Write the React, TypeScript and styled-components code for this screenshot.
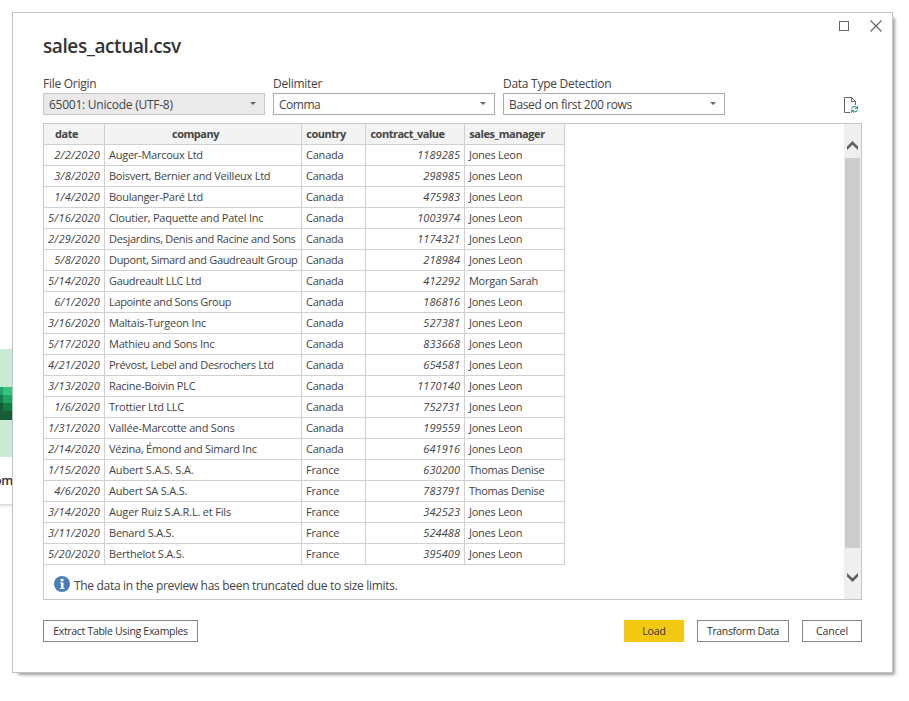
import React from "react";
import styled, { createGlobalStyle } from "styled-components";

const Global = createGlobalStyle`
  * { box-sizing: border-box; }
  html, body { margin: 0; background: #fff; }
  body { font-family: "Open Sans", "Noto Sans", sans-serif; color: #444; overflow: hidden; }
`;

const Page = styled.div`
  position: relative;
  width: 909px;
  height: 701px;
  padding: 12px;
  overflow: hidden;
  background: #fff;
`;

const BackCard = styled.div`
  position: absolute;
  left: 0;
  top: 349px;
  width: 16px;
  height: 156px;
  border-bottom: 1px solid #dcdcdc;
  box-shadow: 0 1px 3px rgba(0, 0, 0, 0.12);
  overflow: hidden;
`;

const BackTile = styled.div`
  height: 108px;
  padding-top: 38px;
  background: #c8ead7;
  svg { display: block; }
`;

const BackLabel = styled.div`
  margin: 15px 0 0 -6px;
  font-size: 12.5px;
  line-height: 18px;
  font-weight: 600;
  color: #333;
  letter-spacing: -0.3px;
  white-space: nowrap;
`;

const Dialog = styled.div`
  position: relative;
  width: 881px;
  height: 661px;
  padding: 0 30px;
  background: #fff;
  border: 1px solid #c3c3c3;
  box-shadow: 4px 4px 3px -2px rgba(0, 0, 0, 0.38);
  display: flex;
  flex-direction: column;
`;

const WindowControls = styled.div`
  height: 26px;
  margin-right: -20px;
  display: flex;
  justify-content: flex-end;
  align-items: center;
  gap: 21px;
  svg { display: block; }
`;

const Title = styled.h1`
  margin: -7px 0 0;
  height: 28px;
  font-size: 19px;
  line-height: 28px;
  font-weight: 600;
  letter-spacing: -0.4px;
  color: #333;
`;

const Options = styled.div`
  display: flex;
  align-items: flex-end;
  gap: 8px;
  margin-top: 15px;
  height: 40px;
`;

const Field = styled.div`
  width: 222px;
`;

const Label = styled.div`
  height: 18px;
  font-size: 12px;
  line-height: 18px;
  letter-spacing: -0.27px;
`;

const Select = styled.div<{ $muted?: boolean; $spacing?: number }>`
  height: 22px;
  border: 1px solid ${(p) => (p.$muted ? "#c6c6c6" : "#ababab")};
  background: ${(p) => (p.$muted ? "#eaeaea" : "#fff")};
  display: flex;
  align-items: center;
  justify-content: space-between;
  padding: 2px 8px 0 5px;
  font-size: 12px;
  line-height: 18px;
  letter-spacing: ${(p) => p.$spacing ?? -0.25}px;
  svg { display: block; margin-top: -3px; }
`;

const Refresh = styled.div`
  margin-left: auto;
  margin-right: 3px;
  margin-bottom: 1px;
  svg { display: block; }
`;

const Preview = styled.div`
  margin-top: 8px;
  height: 477px;
  border: 1px solid #c6c6c6;
  display: flex;
  justify-content: space-between;
`;

const Table = styled.div`
  width: 521px;
  font-size: 11px;
  line-height: 20px;
`;

const Row = styled.div<{ $head?: boolean }>`
  display: grid;
  grid-template-columns: 61px 197px 64px 99px 100px;
  height: 21px;
  background: ${(p) => (p.$head ? "#f3f3f3" : "#fff")};
`;

const Cell = styled.div<{ $num?: boolean; $spacing?: number }>`
  height: 21px;
  border-right: 1px solid #d0d0d0;
  border-bottom: 1px solid #d0d0d0;
  padding: 0 4px;
  white-space: nowrap;
  text-align: ${(p) => (p.$num ? "right" : "left")};
  font-style: ${(p) => (p.$num ? "italic" : "normal")};
  letter-spacing: ${(p) => p.$spacing ?? -0.22}px;
`;

const HeadCell = styled(Cell)`
  padding: 0 19px 0 4px;
  text-align: center;
  font-weight: 700;
  letter-spacing: ${(p) => p.$spacing ?? -0.5}px;
`;

const Notice = styled.div`
  display: flex;
  align-items: flex-start;
  gap: 4px;
  margin: 10px 0 0 10px;
  font-size: 12px;
  line-height: 18px;
  letter-spacing: -0.31px;
  svg { display: block; margin-top: 1px; }
  span { padding-top: 2px; }
`;

const ScrollBar = styled.div`
  width: 17px;
  background: #efefef;
  padding: 0 1px;
  display: grid;
  grid-template-rows: 34px 390px 51px;
  justify-items: center;
  svg { display: block; }
`;

const Thumb = styled.div`
  width: 15px;
  background: #cccccc;
`;

const ArrowBox = styled.div<{ $top: number }>`
  padding-top: ${(p) => p.$top}px;
`;

const Footer = styled.div`
  margin-top: 20px;
  display: flex;
  gap: 13px;
`;

const Button = styled.button<{ $w: number; $primary?: boolean; $spacing?: number }>`
  width: ${(p) => p.$w}px;
  height: 22px;
  padding: 0;
  border: 1px solid ${(p) => (p.$primary ? "#f2c811" : "#848484")};
  background: ${(p) => (p.$primary ? "#f2c811" : "#fff")};
  font-family: inherit;
  font-size: 10.5px;
  line-height: 20px;
  color: #333;
  letter-spacing: ${(p) => p.$spacing ?? -0.1}px;
  white-space: nowrap;
`;

const Spacer = styled.div`
  flex: 1;
`;

// date, company, country, contract value, sales manager, company tracking
const rows: [string, string, string, string, string, number][] = [
  ["2/2/2020", "Auger-Marcoux Ltd", "Canada", "1189285", "Jones Leon", -0.25],
  ["3/8/2020", "Boisvert, Bernier and Veilleux Ltd", "Canada", "298985", "Jones Leon", -0.25],
  ["1/4/2020", "Boulanger-Paré Ltd", "Canada", "475983", "Jones Leon", -0.28],
  ["5/16/2020", "Cloutier, Paquette and Patel Inc", "Canada", "1003974", "Jones Leon", -0.22],
  ["2/29/2020", "Desjardins, Denis and Racine and Sons", "Canada", "1174321", "Jones Leon", -0.31],
  ["5/8/2020", "Dupont, Simard and Gaudreault Group", "Canada", "218984", "Jones Leon", -0.31],
  ["5/14/2020", "Gaudreault LLC Ltd", "Canada", "412292", "Morgan Sarah", -0.35],
  ["6/1/2020", "Lapointe and Sons Group", "Canada", "186816", "Jones Leon", -0.35],
  ["3/16/2020", "Maltais-Turgeon Inc", "Canada", "527381", "Jones Leon", -0.22],
  ["5/17/2020", "Mathieu and Sons Inc", "Canada", "833668", "Jones Leon", -0.25],
  ["4/21/2020", "Prévost, Lebel and Desrochers Ltd", "Canada", "654581", "Jones Leon", -0.31],
  ["3/13/2020", "Racine-Boivin PLC", "Canada", "1170140", "Jones Leon", -0.28],
  ["1/6/2020", "Trottier Ltd LLC", "Canada", "752731", "Jones Leon", -0.25],
  ["1/31/2020", "Vallée-Marcotte and Sons", "Canada", "199559", "Jones Leon", -0.2],
  ["2/14/2020", "Vézina, Émond and Simard Inc", "Canada", "641916", "Jones Leon", -0.27],
  ["1/15/2020", "Aubert S.A.S. S.A.", "France", "630200", "Thomas Denise", -0.15],
  ["4/6/2020", "Aubert SA S.A.S.", "France", "783791", "Thomas Denise", -0.2],
  ["3/14/2020", "Auger Ruiz S.A.R.L. et Fils", "France", "342523", "Jones Leon", -0.18],
  ["3/11/2020", "Benard S.A.S.", "France", "524488", "Jones Leon", -0.22],
  ["5/20/2020", "Berthelot S.A.S.", "France", "395409", "Jones Leon", -0.2],
];

const Caret = () => (
  <svg width="6" height="3" viewBox="0 0 6 3"><path d="M0 0h6L3 3z" fill="#666" /></svg>
);

const Chevron = ({ down }: { down?: boolean }) => (
  <svg width="11" height="9" viewBox="0 0 11 9">
    <path
      d={down ? "M0 3.500L5.500 9 11 3.500V0L5.500 5.200 0 0z" : "M0 5.500L5.500 0 11 5.500V9L5.500 3.800 0 9z"}
      fill="#606060"
    />
  </svg>
);

export default function App() {
  return (
    <Page>
      <Global />
      <BackCard>
        <BackTile>
          <svg width="12" height="33" shapeRendering="crispEdges">
            <rect width="12" height="33" fill="#185c37" />
            <rect width="3" height="8" fill="#21a366" />
            <rect x="3" width="9" height="8" fill="#33c481" />
            <rect y="8" width="3" height="8" fill="#148047" />
            <rect x="3" y="8" width="9" height="8" fill="#21a366" />
            <rect x="3" y="16" width="9" height="8" fill="#107c41" />
          </svg>
        </BackTile>
        <BackLabel>om</BackLabel>
      </BackCard>
      <Dialog>
        <WindowControls>
          <svg width="10" height="10"><rect x=".5" y=".5" width="9" height="9" fill="none" stroke="#666" /></svg>
          <svg width="12" height="12"><path d="M.5 .5l11 11M11.5 .5l-11 11" stroke="#666" strokeWidth="1.2" /></svg>
        </WindowControls>
        <Title>sales_actual.csv</Title>
        <Options>
          <Field>
            <Label>File Origin</Label>
            <Select $muted>65001: Unicode (UTF-8)<Caret /></Select>
          </Field>
          <Field>
            <Label>Delimiter</Label>
            <Select $spacing={-0.5}>Comma<Caret /></Select>
          </Field>
          <Field>
            <Label>Data Type Detection</Label>
            <Select $spacing={-0.35}>Based on first 200 rows<Caret /></Select>
          </Field>
          <Refresh>
            <svg width="15" height="17" viewBox="0 0 15 17" fill="none">
              <path d="M6 15.500H.5V.5h7l4 4V8M7.500 .5v4h4" stroke="#666" />
              <path
                d="M7.500 11.500C8.500 9.200 11.500 9 13 11M13.500 8.800V11.500H11M13.500 13C12.500 15.400 9.500 15.500 8 13.600M7.500 16V13.300H10"
                stroke="#4b9b7d"
                strokeWidth="1.1"
              />
            </svg>
          </Refresh>
        </Options>
        <Preview>
          <div>
            <Table>
              <Row $head>
                <HeadCell>date</HeadCell>
                <HeadCell>company</HeadCell>
                <HeadCell>country</HeadCell>
                <HeadCell>contract_value</HeadCell>
                <HeadCell $spacing={-0.42}>sales_manager</HeadCell>
              </Row>
              {rows.map(([date, company, country, value, manager, tracking]) => (
                <Row key={date + company}>
                  <Cell $num $spacing={0.2}>{date}</Cell>
                  <Cell $spacing={tracking}>{company}</Cell>
                  <Cell>{country}</Cell>
                  <Cell $num $spacing={0.05}>{value}</Cell>
                  <Cell $spacing={-0.27}>{manager}</Cell>
                </Row>
              ))}
            </Table>
            <Notice>
              <svg width="16" height="16" viewBox="0 0 16 16">
                <circle cx="8" cy="8" r="8" fill="#4a7ebb" />
                <circle cx="8" cy="4" r="1.600" fill="#fff" />
                <path d="M6 6.500h3.500V12h1v1H6v-1h1V7.500H6z" fill="#fff" />
              </svg>
              <span>The data in the preview has been truncated due to size limits.</span>
            </Notice>
          </div>
          <ScrollBar>
            <ArrowBox $top={17}><Chevron /></ArrowBox>
            <Thumb />
            <ArrowBox $top={25}><Chevron down /></ArrowBox>
          </ScrollBar>
        </Preview>
        <Footer>
          <Button $w={155} $spacing={-0.3}>Extract Table Using Examples</Button>
          <Spacer />
          <Button $w={60} $primary>Load</Button>
          <Button $w={92} $spacing={-0.35}>Transform Data</Button>
          <Button $w={60}>Cancel</Button>
        </Footer>
      </Dialog>
    </Page>
  );
}
